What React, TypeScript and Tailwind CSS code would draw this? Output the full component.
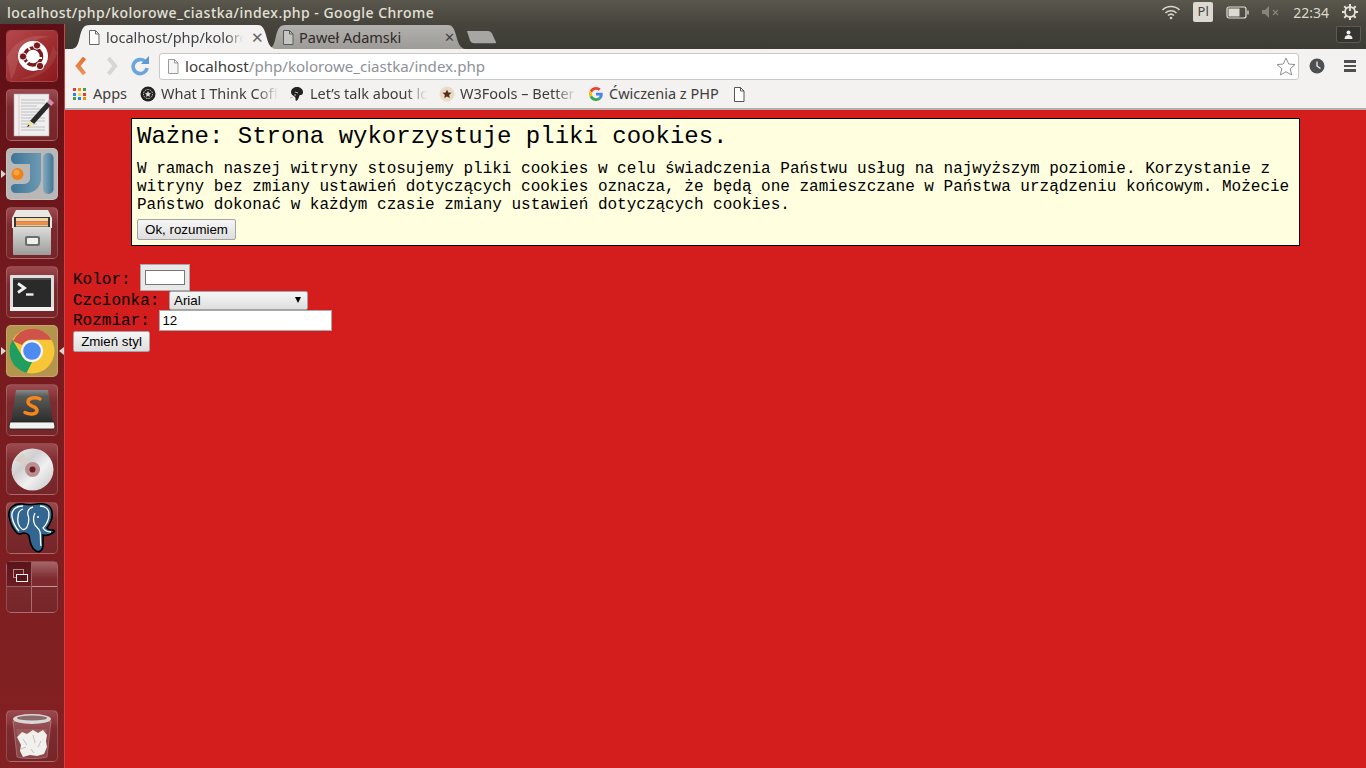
import React from "react";

const UI = { fontFamily: '"Noto Sans", "Open Sans", sans-serif' };
const MONO = { fontFamily: '"Liberation Mono", monospace' };
const ARIAL = { fontFamily: '"Liberation Sans", Arial, sans-serif' };

function Tile({ children, className = "", arrowL = false, arrowR = false, bg = "bg-[linear-gradient(180deg,#9c4a4e_0%,#7d2b2f_35%,#762528_100%)]" }: { children?: React.ReactNode; className?: string; arrowL?: boolean; arrowR?: boolean; bg?: string }) {
  return (
    <div className={`relative w-[52px] h-[52px] shrink-0 rounded-[5px] border border-[#ffffff2e] overflow-visible ${bg} ${className}`}>
      {children}
      {arrowL && <span className="absolute left-[-6px] top-[21px] w-0 h-0 border-y-[4px] border-y-transparent border-l-[5px] border-l-[#d9d5d0]" />}
      {arrowR && <span className="absolute right-[-7px] top-[21px] w-0 h-0 border-y-[4px] border-y-transparent border-r-[5px] border-r-[#d9d5d0]" />}
    </div>
  );
}

function PageIcon({ color = "#555", fill = "#fff", className = "" }: { color?: string; fill?: string; className?: string }) {
  return (
    <svg width="12" height="15" viewBox="0 0 12 15" className={`shrink-0 ${className}`}>
      <path d="M1.5.5h6l3.5 3.5v10.5h-9.5z" fill={fill} stroke={color} />
      <path d="M7.5.5v3.5h3.5" fill="none" stroke={color} />
    </svg>
  );
}

function UbuntuIcon() {
  return (
    <svg viewBox="0 0 50 50" className="w-full h-full">
      <defs>
        <linearGradient id="ub" x1="0" y1="0" x2="1" y2="1"><stop offset="0" stopColor="#b5474a" /><stop offset="1" stopColor="#8c1a1c" /></linearGradient>
      </defs>
      <rect width="50" height="50" rx="4" fill="url(#ub)" />
      <path d="M0 26C8 8 26 2 44 6 30 6 14 14 10 34 8 42 6 46 4 48z" fill="#ffffff1c" />
      <path d="M50 22C46 38 32 48 14 48 32 42 42 34 46 14z" fill="#ffffff14" />
      <circle cx="26" cy="25" r="15" fill="#fff" />
      <circle cx="26" cy="25.500" r="8.500" fill="none" stroke="#7a1a1e" strokeWidth="3.600" />
      <path d="M20 14l3 5M17 34l5-4M35 27h-6" stroke="#fff" strokeWidth="1.800" />
      <circle cx="30" cy="14.500" r="3.700" fill="#7a1a1e" stroke="#fff" strokeWidth="1" />
      <circle cx="16" cy="25.500" r="3.700" fill="#7a1a1e" stroke="#fff" strokeWidth="1" />
      <circle cx="33" cy="35" r="3.700" fill="#7a1a1e" stroke="#fff" strokeWidth="1" />
    </svg>
  );
}

function EditorIcon() {
  return (
    <svg viewBox="0 0 50 50" className="w-full h-full">
      <rect x="7" y="4" width="35" height="42" fill="#efefef" stroke="#a8a8a8" strokeWidth="0.6" />
      <path d="M12 4v42" stroke="#eab4b4" strokeWidth="0.7" />
      {[10, 13, 16, 19, 22, 25, 28, 31, 34, 37, 40].map((y, i) => (
        <path key={y} d={`M14 ${y}H${i % 3 === 2 ? 30 : 38}`} stroke="#aeaeae" strokeWidth="0.7" />
      ))}
      <path d="M44 15L27 34l-4-3 17-19z" fill="#2a2a2a" />
      <path d="M40 12l3-3 4 4-3 3z" fill="#d889b0" />
      <path d="M23 31l4 3-7 3z" fill="#f0e48c" />
      <path d="M20 37l2.500-1-1-1.500z" fill="#111" />
    </svg>
  );
}

function JetIcon() {
  return (
    <svg viewBox="0 0 50 50" className="w-full h-full">
      <defs>
        <linearGradient id="jb" x1="0" y1="0" x2="1" y2="0"><stop offset="0" stopColor="#3d7598" /><stop offset="1" stopColor="#6f9ab3" /></linearGradient>
        <linearGradient id="jc" x1="0" y1="0" x2="1" y2="0"><stop offset="0" stopColor="#87aabf" /><stop offset="1" stopColor="#3f7598" /></linearGradient>
      </defs>
      <path d="M8 4H34V29C34 38 28 44 19 44H9C6 44 4 42 4 39C4 36 6 35 9 35H16C20 35 23 33 23 29V15H9C6 15 4 13 4 9C4 6 6 4 8 4z" fill="url(#jb)" />
      <rect x="36" y="4" width="10.500" height="41" rx="5" fill="url(#jc)" />
      <circle cx="10.500" cy="25" r="6" fill="#ee8418" />
      <circle cx="9.500" cy="23.500" r="3" fill="#f7a243" />
    </svg>
  );
}

function CabinetIcon() {
  return (
    <svg viewBox="0 0 50 50" className="w-full h-full">
      <defs>
        <linearGradient id="cab" x1="0" y1="0" x2="0" y2="1"><stop offset="0" stopColor="#dcdcda" /><stop offset="1" stopColor="#9c9c9a" /></linearGradient>
      </defs>
      <path d="M9 2h32l4 8v10H5V10z" fill="#e8e8e6" />
      <path d="M7 9h36v12H7z" fill="#3f342e" />
      <rect x="9" y="10" width="32" height="3.500" fill="#f4d6a4" />
      <rect x="9" y="13.500" width="32" height="3" fill="#ef8f4a" />
      <rect x="9" y="16.500" width="32" height="2" fill="#f4c894" />
      <rect x="6" y="19" width="38" height="28" rx="1" fill="url(#cab)" />
      <rect x="18" y="28" width="15" height="10" rx="2" fill="#6d6d6b" />
      <rect x="20" y="30" width="11" height="6" rx="1" fill="#f0f0ee" />
    </svg>
  );
}

function TerminalIcon() {
  return (
    <svg viewBox="0 0 50 50" className="w-full h-full">
      <rect x="3" y="8" width="44" height="36" rx="1" fill="#dedede" />
      <rect x="3" y="40" width="44" height="4" fill="#f2f2f2" />
      <rect x="6" y="11" width="38" height="29" fill="#2a2a2a" />
      <rect x="6" y="11" width="38" height="2" fill="#4a4a4a" />
      <path d="M11 16.500l6.500 4.500-6.500 4.500" fill="none" stroke="#f2f2f2" strokeWidth="2.800" />
      <path d="M19 27.500h7.500" stroke="#f2f2f2" strokeWidth="2.400" />
    </svg>
  );
}

function ChromeIcon() {
  return (
    <svg viewBox="0 0 50 50" className="w-full h-full">
      <circle cx="25" cy="25" r="22.500" fill="#f6c636" />
      <path d="M25 2.500A22.500 22.500 0 0 1 44.500 13.750H25A11.250 11.250 0 0 0 15 19L6 15A22.500 22.500 0 0 1 25 2.500z" fill="#cf5349" />
      <path d="M5.500 13.750 15.300 30.600A11.250 11.250 0 0 0 25 36.250L19.500 47A22.500 22.500 0 0 1 5.500 13.750z" fill="#1f9e5f" />
      <circle cx="25" cy="25" r="11" fill="#f4f4f4" />
      <circle cx="25" cy="25" r="8.800" fill="#4d8bf0" />
    </svg>
  );
}

function SublimeIcon() {
  return (
    <svg viewBox="0 0 50 50" className="w-full h-full">
      <defs>
        <linearGradient id="sb" x1="0" y1="0" x2="0" y2="1"><stop offset="0" stopColor="#8a8a88" /><stop offset="0.2" stopColor="#5a5a58" /><stop offset="1" stopColor="#2c2c2c" /></linearGradient>
      </defs>
      <path d="M9 5h32l5 32H4z" fill="url(#sb)" />
      <path d="M3 37h44l1 5-1 2H3l-1-2z" fill="#f2f2f0" stroke="#1d1d1d" strokeWidth="0.8" />
      <path d="M33 14c-5-2.500-12-1-12 3 0 5 10 4 9 9-1 3.500-7 4-12 1.500" fill="none" stroke="#f4861c" strokeWidth="3.500" strokeLinecap="round" />
    </svg>
  );
}

function DiscIcon() {
  return (
    <svg viewBox="0 0 50 50" className="w-full h-full">
      <defs>
        <linearGradient id="cd" x1="0" y1="0" x2="1" y2="1"><stop offset="0" stopColor="#f2f2f2" /><stop offset="0.35" stopColor="#cfcfcf" /><stop offset="0.6" stopColor="#f1f1f1" /><stop offset="1" stopColor="#c2c2c2" /></linearGradient>
      </defs>
      <circle cx="25.500" cy="25.500" r="21" fill="url(#cd)" />
      <path d="M25 25L8 16a20 20 0 0 1 8-7z" fill="#d7cfc8" />
      <circle cx="25.500" cy="25.500" r="7.500" fill="#b88f90" />
      <circle cx="25.500" cy="25.500" r="3" fill="#6f1a1e" />
    </svg>
  );
}

function ElephantIcon() {
  return (
    <svg viewBox="0 0 50 50" className="w-full h-full">
      <path d="M16 1C6 0 1 6 2 13c1 7 4 13 8 17 2 2 3 1 6 0 2 0 5 0 6 3 1 6 2 12 7 15 4 2 7-1 7-6V32c3 1 7 0 11-3 1-1 0-2-2-2s-4 0-5-2c3-4 6-10 5-16C44 2 38 0 30 1c-5 1-9 1-14 0z" fill="#336791" stroke="#000" strokeWidth="1.600" />
      <path d="M16 3C8 3 4 8 5 14c1 5 3 10 7 14M26 4c-4 1-6 4-5 8 1 3 1 8-1 12-1 2-3 3-5 2-3-2-5-7-4-12 0-4 2-7 5-8M28 10c-2 4-2 8 0 12 1 2 4 3 5 7 1 4 0 10 1 14M33 3c5 0 9 3 9 8 0 4-2 10-6 14 2 3 5 4 8 4" fill="none" stroke="#fff" strokeWidth="1.300" />
      <circle cx="31" cy="14" r="1" fill="#fff" />
    </svg>
  );
}

function WorkspaceIcon() {
  return (
    <div className="w-full h-full grid grid-cols-2 grid-rows-2 relative">
      <div className="border-r border-b border-[#ffffff55] bg-[linear-gradient(180deg,#5a141b,#6c1d21)]" />
      <div className="border-b border-[#ffffff55] bg-[linear-gradient(180deg,#a56669,#7d2b2f_70%)]" />
      <div className="border-r border-[#ffffff55]" />
      <div />
      <span className="absolute left-[6px] top-[7px] w-[11px] h-[9px] border border-[#ffffff80]" />
      <span className="absolute left-[9px] top-[12px] w-[12px] h-[8px] border-[1.500px] border-[#f2f2f2] bg-[#5a141b]" />
    </div>
  );
}

function TrashIcon() {
  return (
    <svg viewBox="0 0 50 50" className="w-full h-full">
      <path d="M6 10l4 36c5 2 25 2 30 0l4-36z" fill="#ffffff26" stroke="#ffffff40" />
      <path d="M9 18l31 0-1 6H10z" fill="#ffffff18" />
      <ellipse cx="25" cy="8" rx="19" ry="5" fill="#d8d8d6" />
      <ellipse cx="25" cy="7" rx="15" ry="2.600" fill="#8c6a6a" />
      <path d="M10 26l5-5 5 2 6-4 5 3 5-3 4 5-1 6 1 6-3 7-7 2-7-1-7 2-3-6 1-6-2-4z" fill="#f1f0ed" />
      <path d="M16 28l4 6M26 24l2 8M34 30l-3 6M14 38l5-2M24 38l3 4" stroke="#c0c0bc" strokeWidth="1" />
    </svg>
  );
}

function TopBar() {
  return (
    <div className="h-[24px] bg-[linear-gradient(180deg,#5a574d,#46443c)] flex items-center text-[#e4e1d8] shrink-0">
      <div className="pl-[7px] text-[14px] font-medium tracking-[0.48px]" style={UI}>localhost/php/kolorowe_ciastka/index.php - Google Chrome</div>
      <div className="ml-auto flex items-center h-full">
        <svg width="20" height="16" viewBox="0 0 20 16" className="mr-[12px]">
          <g fill="none" stroke="#d8d5cc" strokeWidth="1.600">
            <path d="M1.500 6a12 12 0 0 1 17 0" />
            <path d="M4.500 9a8 8 0 0 1 11 0" />
            <path d="M7 11.500a4.500 4.500 0 0 1 6 0" />
          </g>
          <circle cx="10" cy="14" r="1.300" fill="#d8d5cc" />
        </svg>
        <div className="w-[20px] h-[20px] mr-[13px] rounded-[2px] bg-[#dcd9d2] text-[#45433b] text-[13px] flex items-center justify-center" style={UI}>Pl</div>
        <svg width="24" height="13" viewBox="0 0 24 13" className="mr-[11px]">
          <rect x="1" y="1" width="19" height="11" rx="2" fill="none" stroke="#e4e1d8" strokeWidth="1.200" />
          <rect x="2.500" y="2.500" width="11" height="8" fill="#dcd9d2" />
          <rect x="21" y="4.500" width="2" height="4" fill="#a9a69d" />
        </svg>
        <svg width="19" height="12" viewBox="0 0 19 12" className="mr-[13px]">
          <path d="M1 4h3l4-4v12l-4-4H1z" fill="#86847b" />
          <path d="M12 4l5 5M17 4l-5 5" stroke="#86847b" strokeWidth="1.300" />
        </svg>
        <span className="text-[14px] mr-[12px] text-[#dcd9d0]" style={UI}>22:34</span>
        <svg width="18" height="18" viewBox="0 0 18 18" className="mr-[7px]">
          <path d="M9 1v3M9 14v3M1 9h3M14 9h3M3.300 3.300l2.200 2.200M12.500 12.500l2.200 2.200M14.700 3.300l-2.200 2.200M5.500 12.500l-2.200 2.200" stroke="#e4e1d8" strokeWidth="2" />
          <circle cx="9" cy="9" r="5" fill="none" stroke="#e4e1d8" strokeWidth="1.800" />
          <path d="M9 3v5" stroke="#e4e1d8" strokeWidth="1.800" />
        </svg>
      </div>
    </div>
  );
}

function TabStrip() {
  return (
    <div className="h-[25px] bg-[linear-gradient(180deg,#46443c,#3c3b35)] flex items-end shrink-0">
      <div className="relative z-10 w-[203px] h-[24px] ml-[7px] shrink-0">
        <svg width="203" height="24" viewBox="0 0 203 24" className="absolute inset-0">
          <path d="M0 24C5 23 6 20 8 11 10 3 12 0 18 0H186c4 0 6 3 8 10 2 8 4 13 9 14z" fill="#f3f2f0" />
        </svg>
        <div className="relative flex items-center h-full pl-[16px] pt-[1px]">
          <PageIcon color="#666" />
          <span className="ml-[6px] w-[137px] overflow-hidden whitespace-nowrap text-[14.500px] text-[#3f4347] [mask-image:linear-gradient(90deg,#000_88%,transparent)]" style={UI}>localhost/php/kolorowe_ciastka</span>
          <span className="ml-[8px] text-[#666] text-[15px] leading-none" style={ARIAL}>✕</span>
        </div>
      </div>
      <div className="relative w-[197px] h-[24px] ml-[-7px] shrink-0">
        <svg width="197" height="24" viewBox="0 0 197 24" className="absolute inset-0">
          <defs>
            <linearGradient id="t2" x1="0" y1="0" x2="0" y2="1"><stop offset="0" stopColor="#b3b1ad" /><stop offset="1" stopColor="#9d9b97" /></linearGradient>
          </defs>
          <path d="M0 24C5 23 6 20 8 11 10 3 12 0 18 0H180c4 0 6 3 8 10 2 8 4 13 9 14z" fill="url(#t2)" />
        </svg>
        <div className="relative flex items-center h-full pl-[14px] pt-[1px]">
          <PageIcon color="#5a5a5a" fill="#c6c5c2" />
          <span className="ml-[5px] w-[143px] whitespace-nowrap text-[14.500px] text-[#2d2a28]" style={UI}>Paweł Adamski</span>
          <span className="ml-[2px] text-[#444] text-[13px] leading-none" style={ARIAL}>✕</span>
        </div>
      </div>
      <svg width="32" height="14" viewBox="0 0 32 16" preserveAspectRatio="none" className="ml-[1px] mb-[5px] shrink-0">
        <path d="M1 1h21c2 0 3 1 4 3l4 10c0 1 0 1-1 1H8c-2 0-3-1-4-3z" fill="#a8a6a2" />
      </svg>
      <div className="ml-auto mb-[6px] mr-[5px] w-[25px] h-[17px] rounded-b-[3px] border border-[#5b5a53] bg-[#35342f] flex items-center justify-center">
        <svg width="9" height="9" viewBox="0 0 9 9"><circle cx="4.500" cy="2.500" r="2" fill="#eee" /><path d="M.5 9c0-3 2-4 4-4s4 1 4 4z" fill="#eee" /></svg>
      </div>
    </div>
  );
}

function Toolbar() {
  return (
    <div className="h-[34px] bg-[#f3f2f0] flex items-center shrink-0">
      <svg width="14" height="20" viewBox="0 0 14 20" className="ml-[9px]">
        <defs>
          <linearGradient id="bk" x1="0" y1="0" x2="0" y2="1"><stop offset="0" stopColor="#e2702c" /><stop offset="1" stopColor="#ec955c" /></linearGradient>
        </defs>
        <path d="M10.500 2L4 10l6.500 8" fill="none" stroke="url(#bk)" strokeWidth="4.200" />
      </svg>
      <svg width="14" height="20" viewBox="0 0 14 20" className="ml-[17px]">
        <path d="M3.500 2l6.500 8-6.500 8" fill="none" stroke="#d6d6d4" strokeWidth="4.200" />
      </svg>
      <svg width="20" height="20" viewBox="0 0 20 20" className="ml-[11px]">
        <path d="M15 5.500A7 7 0 1 0 17 12" fill="none" stroke="#6aa5dc" strokeWidth="3.600" />
        <path d="M11 8h8V0z" fill="#5b9bd5" />
      </svg>
      <div className="ml-[9px] w-[1140px] h-[27px] bg-white border border-[#c8c8c6] rounded-[3px] flex items-center shrink-0">
        <PageIcon color="#9a9a9a" fill="#f6f6f6" className="ml-[7px]" />
        <span className="ml-[6px] text-[15.100px] text-[#3a3a3a]" style={UI}>localhost<span className="text-[#8e9297]">/php/kolorowe_ciastka/index.php</span></span>
        <svg width="20" height="19" viewBox="0 0 20 19" className="ml-auto mr-[2px]">
          <path d="M10 1l2.700 6 6.300.600-4.800 4.200 1.500 6.200L10 14.800 4.300 18l1.500-6.200L1 7.600 7.300 7z" fill="#fff" stroke="#8f8f8f" strokeWidth="1" />
        </svg>
      </div>
      <svg width="16" height="16" viewBox="0 0 16 16" className="ml-[10px]">
        <circle cx="8" cy="8" r="7.500" fill="#4d4f50" />
        <path d="M8 3.500V8l3.500 2.500" fill="none" stroke="#f3f2f0" strokeWidth="1.300" />
      </svg>
      <div className="ml-[19px] w-[12px] flex flex-col gap-[2px]">
        <span className="h-[2.500px] bg-[#4d4f50]" />
        <span className="h-[2.500px] bg-[#4d4f50]" />
        <span className="h-[2.500px] bg-[#4d4f50]" />
      </div>
    </div>
  );
}

function Bookmark({ icon, text, w, fade = true, className = "" }: { icon: React.ReactNode; text: string; w: number; fade?: boolean; className?: string }) {
  return (
    <div className={`flex items-center shrink-0 ${className}`}>
      {icon}
      <span
        className={`ml-[5px] overflow-hidden whitespace-nowrap text-[14.500px] text-[#3d3d3d] ${fade ? "[mask-image:linear-gradient(90deg,#000_82%,transparent)]" : ""}`}
        style={{ ...UI, width: w }}
      >
        {text}
      </span>
    </div>
  );
}

function Bookmarks() {
  const dots = ["#e53935", "#fb8c00", "#43a047", "#1e88e5", "#fdd835", "#e53935", "#43a047", "#1e88e5", "#fb8c00"];
  return (
    <div className="h-[25px] bg-[#f3f2f0] flex items-center shrink-0 pb-[3px]">
      <div className="ml-[8px] grid grid-cols-3 gap-[1.500px] w-[13px] shrink-0">
        {dots.map((c, i) => <span key={i} className="h-[3px] w-[3px]" style={{ backgroundColor: c }} />)}
      </div>
      <span className="ml-[7px] w-[36px] text-[14.500px] text-[#3d3d3d] shrink-0" style={UI}>Apps</span>
      <Bookmark
        className="ml-[11px]"
        w={117}
        text="What I Think Coffee"
        icon={<svg width="16" height="16" viewBox="0 0 16 16"><circle cx="8" cy="8" r="7.500" fill="#222" /><circle cx="8" cy="8" r="4.500" fill="none" stroke="#ddd" strokeWidth="1" strokeDasharray="1.500 1" /><path d="M8 5l1 2 2 .300-1.500 1.500.4 2L8 10l-1.900.800.4-2L5 7.300 7 7z" fill="#ddd" /></svg>}
      />
      <Bookmark
        className="ml-[11px]"
        w={117}
        text="Let’s talk about love"
        icon={<svg width="16" height="16" viewBox="0 0 16 16"><path d="M2 6c0-3 3-5 6-5s6 2 6 5-2 3-3 3-1 5-4 6c-1-1 0-3-1-4S2 9 2 6z" fill="#222" /><path d="M6 6l3 1M5 9l2 0M1 12l3-1" stroke="#bbb" strokeWidth="1" /></svg>}
      />
      <Bookmark
        className="ml-[12px]"
        w={116}
        text="W3Fools – Better Web"
        icon={<svg width="16" height="16" viewBox="0 0 16 16"><circle cx="8" cy="8" r="7.500" fill="#e8dcc4" /><path d="M8 3.500l1.300 3 3.200.300-2.400 2.100.7 3.100L8 10.400 5.200 12l.7-3.100-2.400-2.100 3.200-.3z" fill="#5a2a20" /></svg>}
      />
      <Bookmark
        className="ml-[13px]"
        w={110}
        fade={false}
        text="Ćwiczenia z PHP"
        icon={<svg width="14" height="14" viewBox="0 0 48 48" className="mr-[1px]"><path fill="#EA4335" d="M24 9.500c3.500 0 6.700 1.200 9.200 3.600l6.900-6.900C35.900 2.400 30.500 0 24 0 14.600 0 6.500 5.400 2.600 13.200l8 6.200C12.500 13.700 17.800 9.500 24 9.500z" /><path fill="#4285F4" d="M47 24.500c0-1.600-.2-3.100-.4-4.500H24v9h12.900c-.6 3-2.200 5.500-4.700 7.200l7.700 6C44.400 37.900 47 31.800 47 24.500z" /><path fill="#FBBC05" d="M10.500 28.600c-.5-1.400-.8-3-.8-4.600s.3-3.200.8-4.600l-8-6.200C.9 16.500 0 20.100 0 24s.9 7.500 2.600 10.800z" /><path fill="#34A853" d="M24 48c6.500 0 11.900-2.100 15.900-5.800l-7.700-6c-2.100 1.400-4.900 2.300-8.200 2.300-6.200 0-11.500-4.200-13.400-9.900l-8 6.200C6.500 42.600 14.600 48 24 48z" /></svg>}
      />
      <PageIcon color="#555" className="ml-[14px]" />
    </div>
  );
}

function Launcher() {
  return (
    <div className="w-[65px] shrink-0 h-full flex flex-col items-center pt-[6px] pr-[1px] bg-[linear-gradient(180deg,#5e0e14_0%,#741a1e_35%,#842122_100%)] border-r border-[#c44a46]">
      <div className="flex flex-col gap-[7px] items-center">
        <Tile bg="bg-[#8d1f22]"><UbuntuIcon /></Tile>
        <Tile><EditorIcon /></Tile>
        <Tile arrowL bg="bg-[#b9b8b6]"><JetIcon /></Tile>
        <Tile><CabinetIcon /></Tile>
        <Tile><TerminalIcon /></Tile>
        <Tile arrowL arrowR bg="bg-[#b3954e]"><ChromeIcon /></Tile>
        <Tile><SublimeIcon /></Tile>
        <Tile><DiscIcon /></Tile>
        <Tile><ElephantIcon /></Tile>
        <Tile><WorkspaceIcon /></Tile>
      </div>
      <Tile className="mt-auto mb-[6px]"><TrashIcon /></Tile>
    </div>
  );
}

const btn = "border border-[#a3a3a3] rounded-[2px] bg-[linear-gradient(180deg,#f6f6f6,#dedede)] text-[13.333px] text-black leading-none";

function Page() {
  return (
    <div className="flex-1 bg-[#d41e1e] border-t-2 border-[#b3b1ad] px-[8px] pt-[8px] text-black text-[16px] leading-[18px]" style={MONO}>
      <div className="ml-[58px] w-[1169px] h-[128px] border border-black bg-[#ffffe0] px-[5px]">
        <h2 className="text-[24px] leading-[27px] mt-[4px]">Ważne: Strona wykorzystuje pliki cookies.</h2>
        <p className="mt-[10px] leading-[18px]">W ramach naszej witryny stosujemy pliki cookies w celu świadczenia Państwu usług na najwyższym poziomie. Korzystanie z witryny bez zmiany ustawień dotyczących cookies oznacza, że będą one zamieszczane w Państwa urządzeniu końcowym. Możecie Państwo dokonać w każdym czasie zmiany ustawień dotyczących cookies.</p>
        <button className={`${btn} mt-[5px] h-[21px] w-[99px]`} style={ARIAL}>Ok, rozumiem</button>
      </div>
      <div className="mt-[18px] h-[27px] flex items-center">
        <span className="pt-[5px]">Kolor:</span>
        <div className="ml-[9.600px] w-[50px] h-[27px] border border-[#a9a9a9] bg-[#e8e8e8] flex items-center justify-center">
          <span className="w-[40px] h-[15px] bg-white border border-[#777]" />
        </div>
      </div>
      <div className="h-[19px] flex items-center">
        <span>Czcionka:</span>
        <div className={`${btn} ml-[9.600px] w-[139px] h-[19px] flex items-center pl-[4px] pr-[5px]`} style={ARIAL}>
          Arial
          <span className="ml-auto mr-[1px] mb-[2px] w-0 h-0 border-x-[3.500px] border-x-transparent border-t-[6px] border-t-black" />
        </div>
      </div>
      <div className="h-[21px] flex items-center">
        <span>Rozmiar:</span>
        <div className="ml-[9.600px] w-[173px] h-[21px] bg-white border border-[#a9a9a9] flex items-center pl-[2px] text-[13.333px]" style={ARIAL}>12</div>
      </div>
      <button className={`${btn} block h-[21px] w-[77px]`} style={ARIAL}>Zmień styl</button>
    </div>
  );
}

export default function App() {
  return (
    <div className="w-[1366px] h-[768px] overflow-hidden flex flex-col bg-[#d41e1e]">
      <TopBar />
      <div className="flex flex-1 min-h-0">
        <Launcher />
        <div className="flex-1 min-w-0 flex flex-col">
          <TabStrip />
          <Toolbar />
          <Bookmarks />
          <Page />
        </div>
      </div>
    </div>
  );
}
